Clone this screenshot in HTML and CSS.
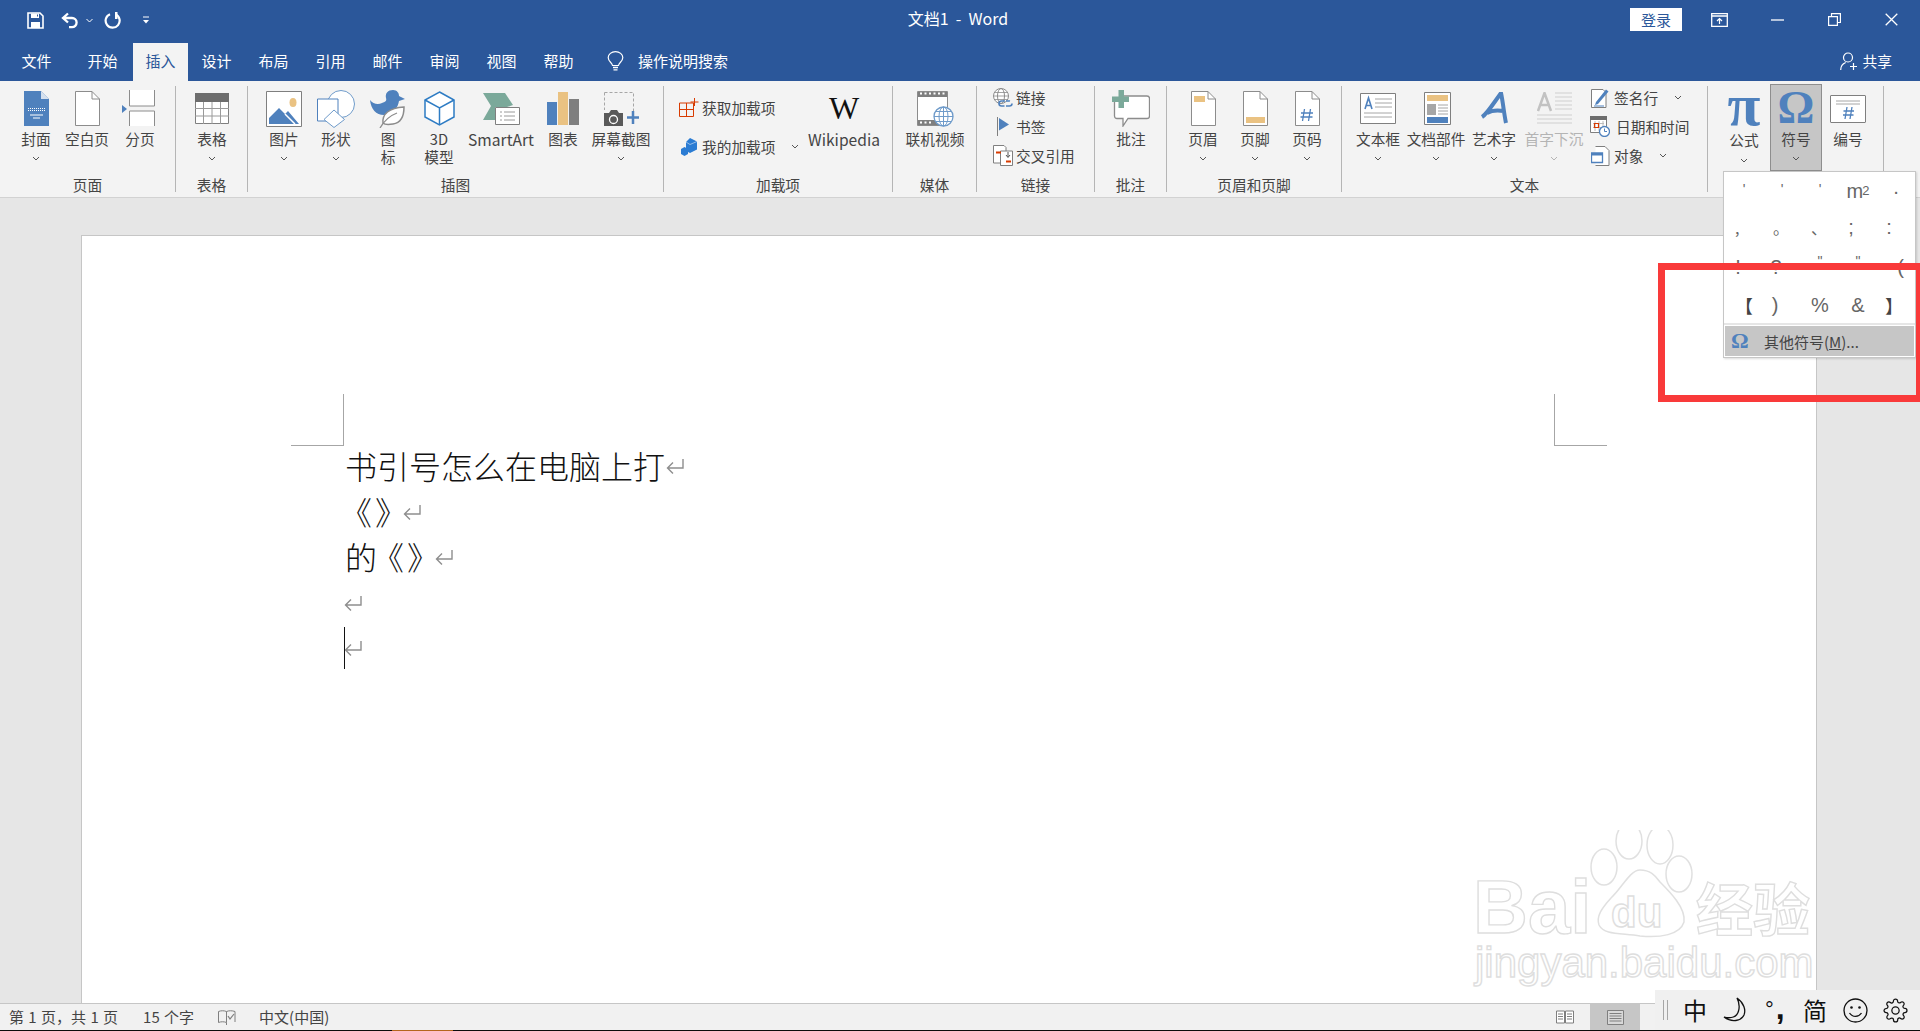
FILE: index.html
```html
<!DOCTYPE html>
<html lang="zh">
<head>
<meta charset="utf-8">
<title>文档1 - Word</title>
<link rel="stylesheet" href="styles.css">
</head>
<body>
<header class="titlebar">
  <div class="qat">
    <svg class="q-save" width="17" height="17" viewBox="0 0 17 17"><path d="M1 1H13L16 4V16H1Z" fill="none" stroke="#fff" stroke-width="1.6"/><path d="M4 1.5H12V6H4Z" fill="#fff"/><path d="M4 10H13V16H4Z" fill="#fff"/><path d="M10 2.5h1v2h-1z" fill="#2b579a"/></svg>
    <svg class="q-undo" width="19" height="17" viewBox="0 0 19 17"><path d="M7 1.5L2 6l5 4.5M2.5 6H11a4.6 4.6 0 0 1 0 9.2H8" fill="none" stroke="#fff" stroke-width="2.3"/></svg>
    <svg class="q-drop" width="7" height="5" viewBox="0 0 7 5"><path d="M.5 1l3 3 3-3" fill="none" stroke="#fff"/></svg>
    <svg class="q-redo" width="17" height="18" viewBox="0 0 17 18"><path d="M6 3.2a7 7 0 1 0 5.5.1" fill="none" stroke="#fff" stroke-width="2.2"/><path d="M11 1v7H13.5V1Z" fill="#fff"/></svg>
    <svg class="q-more" width="8" height="8" viewBox="0 0 8 8"><path d="M1 1h6" stroke="#fff"/><path d="M1 4h6L4 7.5Z" fill="#fff"/></svg>
  </div>
  <div class="doc-title">文档1&nbsp; -&nbsp; Word</div>
  <div class="win-ctrl">
    <button class="login">登录</button>
    <svg class="w-ribbon" width="17" height="14" viewBox="0 0 17 14"><path d="M.7.7H16.300V13.300H.7Z" fill="none" stroke="#fff" stroke-width="1.300"/><path d="M1 3h15" stroke="#fff" stroke-width="1.500"/><path d="M8.500 11V6M6 8l2.500-2.500L11 8" fill="none" stroke="#fff" stroke-width="1.200"/></svg>
    <svg class="w-min" width="13" height="2" viewBox="0 0 13 2"><path d="M0 1h13" stroke="#fff" stroke-width="1.300"/></svg>
    <svg class="w-max" width="13" height="13" viewBox="0 0 13 13"><path d="M.6 3.600H9.400V12.400H.6Z M3.500 3.500V.6H12.400V9.500H9.500" fill="none" stroke="#fff" stroke-width="1.200"/></svg>
    <svg class="w-close" width="13" height="13" viewBox="0 0 13 13"><path d="M.7.7l11.600 11.600M12.300.7L.7 12.300" stroke="#fff" stroke-width="1.300"/></svg>
  </div>
</header>

<nav class="tabs">
  <span class="tab tab-first">文件</span>
  <span class="tab tab-second">开始</span>
  <span class="tab tab-active">插入</span>
  <span class="tab">设计</span>
  <span class="tab">布局</span>
  <span class="tab">引用</span>
  <span class="tab">邮件</span>
  <span class="tab">审阅</span>
  <span class="tab">视图</span>
  <span class="tab">帮助</span>
  <span class="tell">
    <svg width="17" height="20" viewBox="0 0 17 20"><path d="M5.500 14.500C5 11.500 1.200 10.500 1.200 6.500a7.300 5.800 0 0 1 14.600 0C15.800 10.500 12 11.500 11.500 14.500Z" fill="none" stroke="#fff" stroke-width="1.200"/><path d="M6 16.500h5M6.500 18.800h4" stroke="#fff" stroke-width="1.300"/></svg>
    操作说明搜索
  </span>
  <span class="share">
    <svg width="19" height="19" viewBox="0 0 19 19"><circle cx="8" cy="5.500" r="4.500" fill="none" stroke="#fff" stroke-width="1.200"/><path d="M.7 18c0-4 2.500-6.500 5-7.500M11 11.500" fill="none" stroke="#fff" stroke-width="1.200"/><path d="M13.500 11v7M10 14.500h7" stroke="#fff" stroke-width="1.200"/></svg>
    共享
  </span>
</nav>

<section class="ribbon">
  <div class="grp g1">
    <div class="body pl11">
      <div class="big w50">
        <div class="ico"><svg width="25" height="35" viewBox="0 0 25 35"><path d="M0 0H17L25 8V35H0Z" fill="#4f81bd"/><path d="M17 0L25 8H17Z" fill="#d5e0ee"/><path d="M4 17.500h17M4 19.500h17" stroke="#fff" stroke-dasharray="1 1"/><path d="M6 24h13M9 27h7" stroke="#fff"/></svg></div>
        <div class="lbl">封面</div>
        <svg class="chev" width="8" height="5" viewBox="0 0 8 5"><path d="M1 1l3 3 3-3" fill="none" stroke="#555"/></svg>
      </div>
      <div class="big w52">
        <div class="ico"><svg width="25" height="35" viewBox="0 0 25 35"><path d="M.5.5H17L24.500 8V34.500H.5Z" fill="#fff" stroke="#8c8c8c"/><path d="M17 .5V8H24.500" fill="none" stroke="#8c8c8c"/></svg></div>
        <div class="lbl">空白页</div>
      </div>
      <div class="big w54">
        <div class="ico"><svg class="nudge-left" width="33" height="37" viewBox="0 0 33 37"><path d="M7.500 0V16H32.500V0M7.500 36V21H32.500V36" fill="#fff" stroke="#8c8c8c"/><path d="M0 15L5 19L0 23Z" fill="#4f81bd"/></svg></div>
        <div class="lbl">分页</div>
      </div>
    </div>
    <div class="glabel">页面</div>
  </div>

  <div class="grp g2">
    <div class="body pl11">
      <div class="big w50">
        <div class="ico"><svg width="34" height="31" viewBox="0 0 34 31"><path d="M.5.5H33.500V30.500H.5Z" fill="#fff" stroke="#7f7f7f"/><path d="M0 0H34V9H0Z" fill="#6d6d6d"/><path d="M0 15.500H34M0 23H34M8.500 9V31M17 9V31M25.500 9V31" stroke="#9a9a9a"/></svg></div>
        <div class="lbl">表格</div>
        <svg class="chev" width="8" height="5" viewBox="0 0 8 5"><path d="M1 1l3 3 3-3" fill="none" stroke="#555"/></svg>
      </div>
    </div>
    <div class="glabel">表格</div>
  </div>

  <div class="grp g3">
    <div class="body pl10">
      <div class="big w52">
        <div class="ico"><svg width="36" height="36" viewBox="0 0 36 36"><path d="M.5.5H35.500V35.500H.5Z" fill="#fff" stroke="#7f7f7f"/><ellipse cx="27" cy="11.500" rx="3.500" ry="4.500" fill="#eac282"/><path d="M3 33V27L13 17L19 23L22 20L33 33Z" fill="#4f81bd"/><path d="M19 23L29 33" stroke="#fff" stroke-width="1.500"/></svg></div>
        <div class="lbl">图片</div>
        <svg class="chev" width="8" height="5" viewBox="0 0 8 5"><path d="M1 1l3 3 3-3" fill="none" stroke="#555"/></svg>
      </div>
      <div class="big w52">
        <div class="ico"><svg width="38" height="38" viewBox="0 0 38 38"><circle cx="24" cy="14" r="13.500" fill="#fff" stroke="#6f9bca"/><path d="M.5 9H21V31H.5Z" fill="#fff" stroke="#4f81bd"/><path d="M17 20L27.500 29.500L17 37.500L7 29.500Z" fill="#fff" stroke="#6f9bca"/></svg></div>
        <div class="lbl">形状</div>
        <svg class="chev" width="8" height="5" viewBox="0 0 8 5"><path d="M1 1l3 3 3-3" fill="none" stroke="#555"/></svg>
      </div>
      <div class="big w52">
        <div class="ico"><svg width="36" height="38" viewBox="0 0 36 38"><path d="M16 8C15 3 18 0 23 0C27 0 29 3 29 6L35 9L29 11C28 17 24 25 14 25C6 25 1 19 0 10C3 14 8 15 12 13C15 12 17 11 16 8Z" fill="#4f81bd"/><path d="M13 33C12 24 19 18 34 17C34 27 30 33 23 34C20 34.500 15 35 13 33Z" fill="#fff" stroke="#8c8c8c" stroke-width="1.500"/><path d="M10 38C14 31 19 26 27 23" fill="none" stroke="#8c8c8c" stroke-width="1.300"/></svg></div>
        <div class="lbl">图<br>标</div>
      </div>
      <div class="big w50">
        <div class="ico"><svg width="31" height="35" viewBox="0 0 31 35"><path d="M15.500 1L30 9V26L15.500 34L1 26V9Z" fill="#fff" stroke="#2e7cc4" stroke-width="1.500"/><path d="M1 9L15.500 17L30 9M15.500 17V34" fill="none" stroke="#2e7cc4" stroke-width="1.500"/></svg></div>
        <div class="lbl">3D<br>模型</div>
      </div>
      <div class="big w74">
        <div class="ico"><svg width="37" height="32" viewBox="0 0 37 32"><path d="M0 0H22L30 12L24 14H12V21L15 27H0L8 13Z" fill="#7ba99a"/><path d="M12.500 14.500H36.500V31.500H12.500Z" fill="#fff" stroke="#7f7f7f"/><path d="M17 19h2M17 23h2M17 27h2M21 19h11M21 23h11M21 27h11" stroke="#9a9a9a"/></svg></div>
        <div class="lbl latin">SmartArt</div>
      </div>
      <div class="big w50">
        <div class="ico"><svg width="32" height="33" viewBox="0 0 32 33"><path d="M0 10H10V33H0Z" fill="#4f81bd"/><path d="M11 0H21V33H11Z" fill="#eac282"/><path d="M22 7H32V33H22Z" fill="#7f7f7f"/></svg></div>
        <div class="lbl">图表</div>
      </div>
      <div class="big w66">
        <div class="ico"><svg width="35" height="34" viewBox="0 0 35 34"><path d="M.5.5H29.500V27" fill="none" stroke="#a6a6a6" stroke-dasharray="3 2"/><path d="M.5.500V18" fill="none" stroke="#a6a6a6" stroke-dasharray="3 2"/><path d="M0 21H5L7 18H13L15 21H19V34H0Z" fill="#595959"/><circle cx="9.500" cy="27.500" r="4" fill="#595959" stroke="#fff" stroke-width="1.300"/><path d="M29 19V32M23 25.500H35" stroke="#4f81bd" stroke-width="2.500"/></svg></div>
        <div class="lbl">屏幕截图</div>
        <svg class="chev" width="8" height="5" viewBox="0 0 8 5"><path d="M1 1l3 3 3-3" fill="none" stroke="#555"/></svg>
      </div>
    </div>
    <div class="glabel">插图</div>
  </div>

  <div class="grp g4">
    <div class="body pl15">
      <div class="stack stack-two">
        <div class="row"><span class="rico"><svg width="20" height="19" viewBox="0 0 20 19"><path d="M.5 5H14.500V18.500H.5ZM7.500 5V18.500M.5 11.500H14.500" fill="none" stroke="#d83b01"/><path d="M15.500 0V8M11.500 4H19.500" stroke="#d83b01"/></svg></span>获取加载项</div>
        <div class="row"><span class="rico"><svg width="17" height="18" viewBox="0 0 17 18"><path d="M9 0L16 3.500V11.500L9 15L5 13V4Z" fill="#2b7cd3"/><path d="M3.500 9L7 11V16L3.500 18L0 16V11Z" fill="#2b7cd3"/><path d="M5 4L9 6.500L16 3.500" fill="none" stroke="#fff" stroke-width=".5"/></svg></span>我的加载项<svg class="rchev" width="8" height="5" viewBox="0 0 8 5"><path d="M1 1l3 3 3-3" fill="none" stroke="#555"/></svg></div>
      </div>
      <div class="big w72">
        <div class="ico"><span class="wiki-w">W</span></div>
        <div class="lbl latin">Wikipedia</div>
      </div>
    </div>
    <div class="glabel">加载项</div>
  </div>

  <div class="grp g5">
    <div class="body pl10">
      <div class="big w64">
        <div class="ico"><svg width="37" height="36" viewBox="0 0 37 36"><path d="M.5.5H30.500V34.500H.5Z" fill="#fff" stroke="#8c8c8c"/><path d="M1 1H30V6H1ZM1 29H30V34H1Z" fill="#7f7f7f"/><path d="M3 2.500h2M7.500 2.500h2M12 2.500h2M16.500 2.500h2M21 2.500h2M25.500 2.500h2M3 31.500h2M7.500 31.500h2M12 31.500h2" stroke="#fff" stroke-width="2"/><circle cx="26.500" cy="25.500" r="9.500" fill="#fff" stroke="#6f9bca" stroke-width="1.300"/><path d="M17 25.500H36M26.500 16V35M19 20.500H34M19 30.500H34" stroke="#6f9bca"/><ellipse cx="26.500" cy="25.500" rx="4.500" ry="9.500" fill="none" stroke="#6f9bca"/></svg></div>
        <div class="lbl">联机视频</div>
      </div>
    </div>
    <div class="glabel">媒体</div>
  </div>

  <div class="grp g6">
    <div class="body pl16">
      <div class="stack stack-three">
        <div class="row"><span class="rico"><svg width="20" height="20" viewBox="0 0 20 20"><circle cx="8" cy="8" r="7.500" fill="#fff" stroke="#8c8c8c"/><ellipse cx="8" cy="8" rx="3.500" ry="7.500" fill="none" stroke="#8c8c8c"/><path d="M.5 8H15.500M1.500 4.500H14.500M1.500 11.500H14.500" stroke="#8c8c8c" stroke-width=".8"/><path d="M6 15.500a2.500 2.500 0 0 1 2.500-2.500H12M19 15.500a2.500 2.500 0 0 1-2.500 2.500H13M8 18H11.500M13 13h3.500a2.500 2.500 0 0 1 .5 .1M6 15.500a2.500 2.500 0 0 0 2.500 2.500" fill="none" stroke="#4f81bd" stroke-width="1.600"/></svg></span>链接</div>
        <div class="row"><span class="rico"><svg width="16" height="19" viewBox="0 0 16 19"><path d="M2.500 0V19" stroke="#7f7f7f"/><path d="M4 1L14 7.500L4 13.500Z" fill="#4f81bd"/></svg></span>书签</div>
        <div class="row"><span class="rico"><svg width="20" height="21" viewBox="0 0 20 21"><path d="M.5.500H11L13 2.500V18H.5Z" fill="#fff" stroke="#7f7f7f"/><path d="M7.500 6H19.500V20.500H7.500Z" fill="#fff" stroke="#7f7f7f"/><path d="M3 7.500H8" stroke="#d83b01" stroke-width="2"/><path d="M13 16.500H18" stroke="#d83b01" stroke-width="2"/><path d="M15 7v5M13 10l2 2.500 2-2.500" fill="none" stroke="#555"/></svg></span>交叉引用</div>
      </div>
    </div>
    <div class="glabel">链接</div>
  </div>

  <div class="grp g7">
    <div class="body pl11">
      <div class="big w50">
        <div class="ico"><svg width="38" height="37" viewBox="0 0 38 37"><path d="M10 6H35C36.500 6 37.500 7 37.500 8.500V26C37.500 27.500 36.500 28.500 35 28.500H16L11 36V28.500H5C3.500 28.500 2.500 27.500 2.500 26V10" fill="#fff" stroke="#8c8c8c" stroke-width="1.300"/><path d="M6.500 0H12V6.500H17V12H12V18H6.500V12H0V6.500H6.500Z" fill="#7ba99a"/></svg></div>
        <div class="lbl">批注</div>
      </div>
    </div>
    <div class="glabel">批注</div>
  </div>

  <div class="grp g8">
    <div class="body pl10">
      <div class="big w52">
        <div class="ico"><svg width="25" height="35" viewBox="0 0 25 35"><path d="M.5.5H17L24.500 8V34.500H.5Z" fill="#fff" stroke="#8c8c8c"/><path d="M17 .5V8H24.500" fill="none" stroke="#8c8c8c"/><path d="M3 5H14V11H3Z" fill="#eac282"/></svg></div>
        <div class="lbl">页眉</div>
        <svg class="chev" width="8" height="5" viewBox="0 0 8 5"><path d="M1 1l3 3 3-3" fill="none" stroke="#555"/></svg>
      </div>
      <div class="big w52">
        <div class="ico"><svg width="25" height="35" viewBox="0 0 25 35"><path d="M.5.5H17L24.500 8V34.500H.5Z" fill="#fff" stroke="#8c8c8c"/><path d="M17 .5V8H24.500" fill="none" stroke="#8c8c8c"/><path d="M3 26H22V32H3Z" fill="#eac282"/></svg></div>
        <div class="lbl">页脚</div>
        <svg class="chev" width="8" height="5" viewBox="0 0 8 5"><path d="M1 1l3 3 3-3" fill="none" stroke="#555"/></svg>
      </div>
      <div class="big w52">
        <div class="ico"><svg width="25" height="35" viewBox="0 0 25 35"><path d="M.5.5H17L24.500 8V34.500H.5Z" fill="#fff" stroke="#8c8c8c"/><path d="M17 .5V8H24.500" fill="none" stroke="#8c8c8c"/><path d="M9.500 18L7.500 30M15.500 18L13.500 30M6 22H18M5.500 26H17.500" fill="none" stroke="#4f81bd" stroke-width="1.300"/></svg></div>
        <div class="lbl">页码</div>
        <svg class="chev" width="8" height="5" viewBox="0 0 8 5"><path d="M1 1l3 3 3-3" fill="none" stroke="#555"/></svg>
      </div>
    </div>
    <div class="glabel">页眉和页脚</div>
  </div>

  <div class="grp g9">
    <div class="body pl7">
      <div class="big w58">
        <div class="ico"><svg width="36" height="31" viewBox="0 0 36 31"><path d="M.5.500H35.500V30.500H.5Z" fill="#fff" stroke="#7f7f7f"/><path d="M5 16L8.500 5L12 16M6 12.500H11" fill="none" stroke="#4f81bd" stroke-width="1.600"/><path d="M15 6h17M15 10h17M15 14h17M4 20h28M4 24h28" stroke="#a6a6a6"/></svg></div>
        <div class="lbl">文本框</div>
        <svg class="chev" width="8" height="5" viewBox="0 0 8 5"><path d="M1 1l3 3 3-3" fill="none" stroke="#555"/></svg>
      </div>
      <div class="big w58">
        <div class="ico"><svg class="nudge-right" width="27" height="33" viewBox="0 0 27 33"><path d="M.5.500H26.500V32.500H.5Z" fill="#fff" stroke="#7f7f7f"/><path d="M3 3H24V9H3Z" fill="#eac282"/><path d="M3 12H12V23H3Z" fill="#a6a6a6"/><path d="M3 25H24V31H3Z" fill="#4f81bd"/><path d="M14 13h10M14 16h10M14 19h10M14 22h10" stroke="#a6a6a6"/></svg></div>
        <div class="lbl">文档部件</div>
        <svg class="chev" width="8" height="5" viewBox="0 0 8 5"><path d="M1 1l3 3 3-3" fill="none" stroke="#555"/></svg>
      </div>
      <div class="big w58">
        <div class="ico"><svg width="27" height="33" viewBox="0 0 27 33"><path d="M1 25C6 22 12 12 20 1C22 10 23 22 25 31M6 21C11 18 17 18 23 19" fill="none" stroke="#4f81bd" stroke-width="4"/></svg></div>
        <div class="lbl">艺术字</div>
        <svg class="chev" width="8" height="5" viewBox="0 0 8 5"><path d="M1 1l3 3 3-3" fill="none" stroke="#555"/></svg>
      </div>
      <div class="big w62 off">
        <div class="ico"><svg width="35" height="34" viewBox="0 0 35 34"><path d="M1 19L7.500 1L14 19M3 13H12" fill="none" stroke="#c2c2c2" stroke-width="2.500"/><path d="M18 1h17M18 5h17M18 9h17M18 13h17M18 17h17M0 23h35M0 27h35M0 31h35" stroke="#cfcfcf"/></svg></div>
        <div class="lbl">首字下沉</div>
        <svg class="chev" width="8" height="5" viewBox="0 0 8 5"><path d="M1 1l3 3 3-3" fill="none" stroke="#b5b5b5"/></svg>
      </div>
      <div class="stack stack-three stack-text">
        <div class="row"><span class="rico"><svg width="19" height="20" viewBox="0 0 19 20"><path d="M.5 1.500H12L15 4.500V19.500H.5Z" fill="#fff" stroke="#7f7f7f"/><path d="M5 14L15 1.500L17.500 3.500L7 16L4 17Z" fill="#4f81bd"/><path d="M3 18H13" stroke="#4f81bd"/></svg></span>签名行<svg class="rchev" width="8" height="5" viewBox="0 0 8 5"><path d="M1 1l3 3 3-3" fill="none" stroke="#555"/></svg></div>
        <div class="row"><span class="rico"><svg width="20" height="21" viewBox="0 0 20 21"><path d="M.5 1H16.500V16.500H.5Z" fill="#fff" stroke="#7f7f7f"/><path d="M0 0H17V4H0Z" fill="#6d6d6d"/><path d="M3 7.500h11M3 11.500h11M5 5v10M9 5v10M13 5v10" stroke="#bcbcbc"/><path d="M4.500 7.500H8.500V11.500H4.500Z" fill="none" stroke="#d83b01" stroke-width="1.200"/><circle cx="14.500" cy="15.500" r="5" fill="#fff" stroke="#4f81bd" stroke-width="1.300"/><path d="M14.500 12.500V15.500H17" fill="none" stroke="#4f81bd"/></svg></span><span class="shift2">日期和时间</span></div>
        <div class="row"><span class="rico"><svg width="19" height="20" viewBox="0 0 19 20"><path d="M4.500.5H14L18 4.500V19.500H4.500" fill="#fff" stroke="#7f7f7f"/><path d="M.5 7H11.500V16.500H.5Z" fill="#fff" stroke="#4f81bd" stroke-width="1.300"/><path d="M1 7H11V9.500H1Z" fill="#4f81bd"/></svg></span>对象<svg class="rchev" width="8" height="5" viewBox="0 0 8 5"><path d="M1 1l3 3 3-3" fill="none" stroke="#555"/></svg></div>
      </div>
    </div>
    <div class="glabel">文本</div>
  </div>

  <div class="grp g10">
    <div class="body pl10">
      <div class="big w52 lowered">
        <div class="ico"><span class="glyph-pi">π</span></div>
        <div class="lbl">公式</div>
        <svg class="chev" width="8" height="5" viewBox="0 0 8 5"><path d="M1 1l3 3 3-3" fill="none" stroke="#555"/></svg>
      </div>
      <div class="big w52 pressed">
        <div class="ico"><span class="glyph-om">Ω</span></div>
        <div class="lbl">符号</div>
        <svg class="chev" width="8" height="5" viewBox="0 0 8 5"><path d="M1 1l3 3 3-3" fill="none" stroke="#555"/></svg>
      </div>
      <div class="big w52">
        <div class="ico"><svg width="36" height="28" viewBox="0 0 36 28"><path d="M1 .5H35C35.300 .5 35.500 .7 35.500 1V27C35.500 27.300 35.300 27.500 35 27.500H1C.7 27.500 .5 27.300 .5 27V1C.5 .7 .7 .5 1 .5Z" fill="#fff" stroke="#7f7f7f"/><path d="M6 6h24M6 9h24" stroke="#a6a6a6"/><path d="M17 12L15 24M22 12L20 24M13.500 16H24M13 20H23.500" fill="none" stroke="#4f81bd" stroke-width="1.300"/></svg></div>
        <div class="lbl">编号</div>
      </div>
    </div>
  </div>
</section>

<main class="workspace">
  <article class="page">
    <p class="line">书引号怎么在电脑上打<svg class="pil mark" width="18" height="17" viewBox="0 0 18 17"><path d="M17 1V10H2M7 4.500L1.500 10L7 15.500" fill="none" stroke="#8e8e8e" stroke-width="1.400"/></svg></p>
    <p class="line"><span class="quote">《》</span><svg class="mark" width="18" height="17" viewBox="0 0 18 17"><path d="M17 1V10H2M7 4.500L1.500 10L7 15.500" fill="none" stroke="#8e8e8e" stroke-width="1.400"/></svg></p>
    <p class="line">的<span class="quote">《》</span><svg class="mark" width="18" height="17" viewBox="0 0 18 17"><path d="M17 1V10H2M7 4.500L1.500 10L7 15.500" fill="none" stroke="#8e8e8e" stroke-width="1.400"/></svg></p>
    <p class="line empty"><svg class="mark" width="18" height="17" viewBox="0 0 18 17"><path d="M17 1V10H2M7 4.500L1.500 10L7 15.500" fill="none" stroke="#8e8e8e" stroke-width="1.400"/></svg></p>
    <p class="line empty"><span class="caret"></span><svg class="mark" width="18" height="17" viewBox="0 0 18 17"><path d="M17 1V10H2M7 4.500L1.500 10L7 15.500" fill="none" stroke="#8e8e8e" stroke-width="1.400"/></svg></p>
  </article>
</main>

<footer class="status">
  <span class="st st-page">第 1 页，共 1 页</span>
  <span class="st st-count">15 个字</span>
  <svg class="st-book" width="18" height="15" viewBox="0 0 18 15"><path d="M8.500 1.500C6 .5 3 .5 .5 1.500V12.500C3 11.500 6 11.500 8.500 12.500V1.500M8.500 1.500C11 .5 14 .5 17 1.500V12" fill="none" stroke="#7f7f7f"/><path d="M10 6l2 3 4-5" fill="none" stroke="#7f7f7f" stroke-width="1.200"/><path d="M8.500 12.500V15" stroke="#7f7f7f"/></svg>
  <span class="st st-lang">中文(中国)</span>
  <div class="views">
    <span class="view"><svg width="18" height="14" viewBox="0 0 18 14"><path d="M.5 1H8.500V13H.5ZM9.500 1H17.500V13H9.500Z" fill="#fff" stroke="#7f7f7f"/><path d="M2 4h5M2 6.500h5M2 9h5M11 4h5M11 6.500h5M11 9h5" stroke="#7f7f7f"/></svg></span>
    <span class="view view-on"><svg width="17" height="15" viewBox="0 0 17 15"><path d="M.5.5H16.500V14.500H.5Z" fill="#d8d8d8" stroke="#7f7f7f"/><path d="M2.500 3.500H14.500M2.500 6H14.500M2.500 8.500H14.500M2.500 11H14.500" stroke="#7f7f7f"/></svg></span>
  </div>
</footer>
<div class="baseline"><span class="taskmark"></span></div>

<svg class="watermark" width="355" height="170" viewBox="1465 830 355 170">
  <g fill="#fff" stroke="#e0e0e0" stroke-width="1.500">
    <ellipse cx="1629" cy="841" rx="13" ry="18"/>
    <ellipse cx="1660" cy="845" rx="13" ry="19"/>
    <ellipse cx="1604" cy="867" rx="13" ry="18"/>
    <ellipse cx="1679" cy="874" rx="13" ry="18"/>
    <path d="M1640 870C1630 870 1622 888 1611 898C1602 908 1596 916 1599 925C1604 935 1620 933 1640 936C1660 938 1680 935 1684 922C1686 908 1670 892 1660 882C1655 875 1650 870 1640 870Z"/>
  </g>
  <g class="wm-text">
    <text class="wm-bai" x="1473" y="933">Bai</text>
    <text class="wm-du" x="1611" y="927">du</text>
    <text class="wm-jy" x="1696" y="931">经验</text>
    <text class="wm-url" x="1475" y="977">jingyan.baidu.com</text>
  </g>
</svg>

<div class="symbols">
  <div class="sym-grid">
    <span class="s s-top">'</span><span class="s s-top">'</span><span class="s s-top">'</span><span class="s s-m">m<sup>2</sup></span><span class="s s-dot">·</span>
    <span class="s s-low s-l">,</span><span class="s s-low s-l">。</span><span class="s s-low s-l">、</span><span class="s s-semi">;</span><span class="s s-l2">:</span>
    <span class="s s-ex">!</span><span class="s s-ex">?</span><span class="s s-top2">"</span><span class="s s-top2">"</span><span class="s s-r">(</span>
    <span class="s s-b">【</span><span class="s s-r2">)</span><span class="s">%</span><span class="s">&amp;</span><span class="s s-b2">】</span>
  </div>
  <div class="sym-more"><span class="om-small">Ω</span><span>其他符号(<u>M</u>)...</span></div>
</div>

<div class="redbox"></div>

<div class="ime">
  <span class="grip"></span>
  <span class="im im-zh">中</span>
  <svg class="im-svg im-moon" width="24" height="26" viewBox="0 0 24 26"><path d="M14 1C21 6 23 13 21 18C18 24 9 26 1 20C8 22 14 20 15.500 14C17 9 16 5 14 1Z" fill="none" stroke="#111" stroke-width="1.300"/></svg>
  <span class="im-punct"><span class="deg">°</span><span class="com">,</span></span>
  <span class="im im-jian">简</span>
  <svg class="im-svg im-smile" width="25" height="25" viewBox="0 0 25 25"><circle cx="12.500" cy="12.500" r="11.500" fill="none" stroke="#111" stroke-width="1.300"/><circle cx="8.500" cy="9.500" r="1.300" fill="#111"/><circle cx="16.500" cy="9.500" r="1.300" fill="#111"/><path d="M6.500 15c3 4.500 9 4.500 12 0" fill="none" stroke="#111" stroke-width="1.300"/></svg>
  <svg class="im-svg im-gear" width="25" height="25" viewBox="0 0 24 24"><circle cx="12" cy="12" r="3.500" fill="none" stroke="#111" stroke-width="1.200"/><path fill="none" stroke="#111" stroke-width="1.200" d="M19.400 15a1.650 1.650 0 0 0 .33 1.820l.06.06a2 2 0 0 1 0 2.830 2 2 0 0 1-2.830 0l-.06-.06a1.650 1.650 0 0 0-1.820-.33 1.650 1.650 0 0 0-1 1.510V21a2 2 0 0 1-2 2 2 2 0 0 1-2-2v-.09A1.650 1.650 0 0 0 9 19.400a1.650 1.650 0 0 0-1.820.33l-.06.06a2 2 0 0 1-2.830 0 2 2 0 0 1 0-2.830l.06-.06a1.650 1.650 0 0 0 .33-1.820 1.650 1.650 0 0 0-1.510-1H3a2 2 0 0 1-2-2 2 2 0 0 1 2-2h.09A1.650 1.650 0 0 0 4.600 9a1.650 1.650 0 0 0-.33-1.820l-.06-.06a2 2 0 0 1 0-2.830 2 2 0 0 1 2.830 0l.06.06a1.650 1.650 0 0 0 1.820.33H9a1.650 1.650 0 0 0 1-1.510V3a2 2 0 0 1 2-2 2 2 0 0 1 2 2v.09a1.650 1.650 0 0 0 1 1.510 1.650 1.650 0 0 0 1.820-.33l.06-.06a2 2 0 0 1 2.830 0 2 2 0 0 1 0 2.830l-.06.06a1.650 1.650 0 0 0-.33 1.820V9a1.650 1.650 0 0 0 1.510 1H21a2 2 0 0 1 2 2 2 2 0 0 1-2 2h-.09a1.650 1.650 0 0 0-1.510 1z"/></svg>
</div>
</body>
</html>
```

FILE: styles.css
```css
* { box-sizing: border-box; }
html, body { margin: 0; padding: 0; }
body {
  width: 1920px; height: 1031px; overflow: hidden; position: relative;
  display: flex; flex-direction: column;
  font-family: "Noto Sans CJK SC", "Noto Sans", sans-serif;
  font-size: 14.7px; color: #444; background: #e6e6e6;
}
svg { display: block; flex: none; }

/* title bar */
.titlebar {
  height: 43px; background: #2b579a; color: #fff; flex: none;
  display: grid; grid-template-columns: 1fr auto 1fr; align-items: start;
}
.qat { display: flex; align-items: center; height: 40px; padding-left: 27px; }
.q-undo { margin-left: 17px; }
.q-drop { margin-left: 6px; }
.q-redo { margin-left: 11px; }
.q-more { margin-left: 21px; }
.doc-title { font-size: 16px; line-height: 37px; margin-left: -4px; }
.win-ctrl { display: flex; align-items: center; justify-content: flex-end; height: 39px; padding-right: 22px; }
.login {
  width: 52px; height: 23px; border: 0; background: #fff; color: #2b579a; padding: 0;
  font: 15px/23px "Noto Sans CJK SC", sans-serif;
}
.w-ribbon { margin-left: 29px; }
.w-min { margin-left: 43px; }
.w-max { margin-left: 44px; }
.w-close { margin-left: 44px; }

/* tabs */
.tabs {
  height: 38px; background: #2b579a; color: #fff; flex: none;
  display: flex; align-items: stretch; font-size: 15px; line-height: 36px; padding-left: 8px;
}
.tab { width: 57px; text-align: center; }
.tab-second { margin-left: 9px; }
.tab-active { width: 55px; margin-left: 2px; background: #f3f3f3; color: #2b579a; }
.tell { display: flex; align-items: center; margin-left: 20px; font-size: 15px; gap: 14px; height: 36px; }
.share { display: flex; align-items: center; margin-left: auto; padding-right: 28px; gap: 4px; height: 36px; font-size: 14.7px; }

/* ribbon */
.ribbon {
  height: 117px; flex: none; background: #f3f3f3; border-bottom: 1px solid #d2d2d2;
  display: flex; align-items: flex-start; padding-top: 5px;
}
.grp { height: 106px; border-right: 1px solid #b5b5b5; display: flex; flex-direction: column; flex: none; }
.g1 { width: 176px; } .g2 { width: 72px; } .g3 { width: 416px; } .g4 { width: 229px; }
.g5 { width: 84px; } .g6 { width: 118px; } .g7 { width: 72px; } .g8 { width: 175px; }
.g9 { width: 366px; } .g10 { width: 176px; }
.body { height: 90px; display: flex; flex: none; }
.pl7 { padding-left: 7px; } .pl10 { padding-left: 10px; } .pl11 { padding-left: 11px; }
.pl15 { padding-left: 15px; } .pl16 { padding-left: 16px; }
.glabel { height: 16px; line-height: 18px; text-align: center; white-space: nowrap; }
.big {
  height: 87px; margin-top: -2px; padding-top: 4px; flex: none;
  display: flex; flex-direction: column; align-items: center; text-align: center;
}
.w50 { width: 50px; } .w52 { width: 52px; } .w54 { width: 54px; } .w58 { width: 58px; }
.w62 { width: 62px; } .w64 { width: 64px; } .w66 { width: 66px; } .w72 { width: 72px; } .w74 { width: 74px; }
.ico { height: 41px; margin-bottom: 1px; display: flex; align-items: center; justify-content: center; flex: none; }
.lbl { line-height: 18px; white-space: nowrap; }
.latin { font-size: 15.6px; }
.chev { margin-top: 8px; }
.lowered .lbl { margin-top: 1px; }
.lowered .chev { margin-top: 9px; }
.nudge-left { margin-left: -3px; }
.nudge-right { margin-left: 2px; }
.off { color: #b4b4b4; }
.pressed { background: #c6c6c6; box-shadow: inset 0 0 0 1px #8e8e8e; }
.stack-two { width: 129px; padding-top: 2px; flex: none; }
.stack-two .row { height: 39px; }
.stack-three { margin-top: -3px; flex: none; }
.stack-three .row { height: 29px; }
.stack-text { margin-left: 5px; }
.row { display: flex; align-items: center; white-space: nowrap; }
.rico { width: 20px; margin-right: 3px; display: flex; justify-content: center; }
.stack-text .rico { margin-right: 4px; }
.rchev { margin-left: 16px; }
.shift2 { margin-left: 2px; }
.wiki-w { font: 32px/41px "Liberation Serif", serif; color: #111; }
.glyph-pi { font: bold 60px/41px "Liberation Serif", serif; color: #4f81bd; margin-top: -7px; }
.glyph-om { font: bold 46px/41px "Liberation Serif", serif; color: #4f81bd; margin-top: -3px; }

/* workspace */
.workspace { flex: 1; min-height: 0; padding: 37px 0 0 81px; background: #e6e6e6; overflow: hidden; }
.page {
  width: 1736px; height: 100%; background: #fff; position: relative;
  border: 1px solid #c6c6c6; border-bottom: 0; padding: 207px 0 0 263px;
}
.page::before, .page::after {
  content: ""; position: absolute; top: 158px; width: 52px; height: 51px; border-bottom: 1px solid #a6a6a6;
}
.page::before { left: 209px; border-right: 1px solid #a6a6a6; }
.page::after { left: 1472px; border-left: 1px solid #a6a6a6; }
.line {
  margin: 0; height: 45.5px; line-height: 45.5px; font-size: 32px; color: #111;
  display: flex; align-items: center; font-weight: 300;
}
.mark { margin-left: 2px; margin-top: 2px; }
.pil { margin-left: 1px; }
.quote { letter-spacing: 3px; margin-left: -5px; margin-right: -9px; }
.empty { margin-left: -3px; position: relative; }
.caret { position: absolute; left: 2px; top: 2px; width: 1px; height: 42px; background: #111; }

/* status bar */
.status {
  height: 27px; flex: none; background: #f1f1f1; border-top: 1px solid #c6c6c6;
  display: flex; align-items: center; padding-left: 9px; line-height: 26px; font-size: 15px;
}
.st { white-space: nowrap; word-spacing: 1px; }
.st-count { margin-left: 25px; }
.st-book { margin-left: 24px; }
.st-lang { margin-left: 23px; }
.views { margin-left: auto; margin-right: 280px; display: flex; height: 100%; }
.view { width: 50px; display: flex; align-items: center; justify-content: center; }
.view-on { background: #c6c6c6; }
.baseline { height: 1px; flex: none; background: #0c0c0c; }
.taskmark { display: block; width: 61px; height: 1px; margin-left: 392px; background: #b5651d; }

/* watermark */
.watermark { position: absolute; left: 1465px; top: 830px; }
.wm-text text { fill: #fff; stroke: #dedede; stroke-width: 1.4px; }
.wm-bai { font: bold 76px "Liberation Sans", sans-serif; }
.wm-du { font: bold 42px "Liberation Sans", sans-serif; }
.wm-jy { font: bold 57px "Noto Sans CJK SC", sans-serif; }
.wm-url { font: 42px "Liberation Sans", sans-serif; }

/* symbol dropdown */
.symbols {
  position: absolute; left: 1723px; top: 171px; width: 193px; height: 187px;
  background: #fff; border: 1px solid #c6c6c6; box-shadow: 1px 1px 2px rgba(0,0,0,.15);
}
.sym-grid { display: grid; grid-template-columns: repeat(5, 38px); grid-auto-rows: 38px; padding-left: 1px; height: 153px; border-bottom: 2px solid #e6e6e6; }
.s {
  display: flex; align-items: center; justify-content: center;
  font: 20px/38px "Liberation Sans", sans-serif; color: #666;
}
.s-top, .s-top2 { font-size: 14px; align-items: flex-start; line-height: 34px; }
.s-top2 { line-height: 26px; }
.s-m { font-size: 20px; }
.s-m sup { font-size: 13px; line-height: 0; margin-left: -1px; }
.s-dot { font-size: 20px; }
.s-low { font-size: 16px; font-family: "Noto Sans CJK SC", sans-serif; justify-content: flex-start; padding-left: 10px; padding-bottom: 5px; }
.s-semi { padding-right: 14px; padding-bottom: 5px; }
.s-l2 { padding-right: 14px; padding-bottom: 5px; }
.s-ex { padding-right: 12px; }
.s-r { justify-content: flex-end; padding-right: 11px; }
.s-r2 { padding-right: 14px; }
.s-b, .s-b2 { font: 18px/38px "Noto Sans CJK SC", sans-serif; color: #444; }
.s-b2 { padding-right: 4px; }
.sym-more {
  height: 30px; margin: 1px 1px 0; background: #c6c6c6; display: flex; align-items: center;
  font-size: 15px; color: #444; padding-left: 6px;
}
.om-small { width: 33px; font: bold 22px/30px "Liberation Serif", serif; color: #4f81bd; }

.redbox {
  position: absolute; left: 1658px; top: 263px; width: 265px; height: 139px;
  border: 7px solid #f93a3a;
}

/* IME bar */
.ime {
  position: absolute; left: 1655px; top: 990px; width: 265px; height: 40px;
  background: #f0f0f0; display: flex; align-items: center; padding-left: 8px; color: #111;
}
.grip { width: 5px; height: 20px; border-left: 1px solid #a6a6a6; border-right: 1px solid #a6a6a6; margin-right: 15px; }
.im { font-size: 24px; line-height: 40px; width: 24px; text-align: center; }
.im-moon { margin-left: 16px; }
.im-smile { margin-left: 16px; }
.im-gear { margin-left: 15px; }
.im-punct { width: 22px; margin-left: 18px; display: flex; font-family: "Liberation Sans", sans-serif; }
.deg { font-size: 22px; line-height: 30px; }
.com { font-size: 32px; font-weight: bold; line-height: 26px; margin-left: 2px; }
.im-jian { margin-left: 16px; }
```
